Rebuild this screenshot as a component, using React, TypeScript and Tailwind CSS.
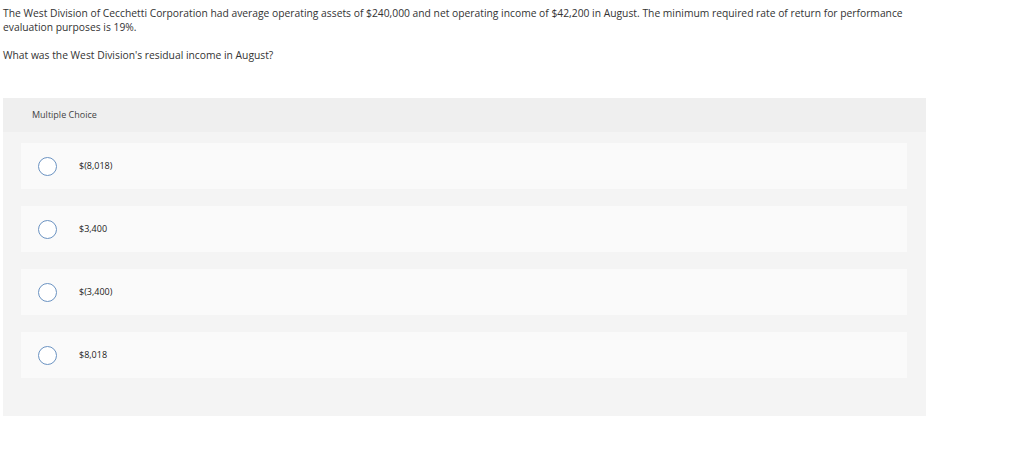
import React from "react";

const options = ["$(8,018)", "$3,400", "$(3,400)", "$8,018"];

export default function App() {
  return (
    <div className="w-[1024px] h-[449px] bg-white text-[#333] font-['Open_Sans',sans-serif]">
      <div className="pl-[3px] pt-[6px] w-[912px] text-[10.3px] leading-[14px]">
        <p>
          The West Division of Cecchetti Corporation had average operating assets of $240,000 and net operating income of $42,200 in August. The minimum required rate of return for performance evaluation purposes is 19%.
        </p>
        <p className="mt-[14px]">What was the West Division's residual income in August?</p>
      </div>
      <div className="ml-[3px] mt-[36px] w-[923px] h-[318px] bg-[#f4f4f4] flex flex-col">
        <div className="h-[34px] bg-[#efefef] flex items-center pl-[29px] text-[9px] text-[#444]">
          Multiple Choice
        </div>
        <div className="flex flex-col gap-[17px] pt-[11px] pl-[18px] pr-[19px]">
          {options.map((o) => (
            <div key={o} className="h-[46px] bg-[#fafafa] flex items-center">
              <div className="ml-[17px] w-[19px] h-[19px] rounded-full border border-[#6b93c2] bg-white" />
              <span className="ml-[22px] text-[9px] text-[#222]">{o}</span>
            </div>
          ))}
        </div>
      </div>
    </div>
  );
}
